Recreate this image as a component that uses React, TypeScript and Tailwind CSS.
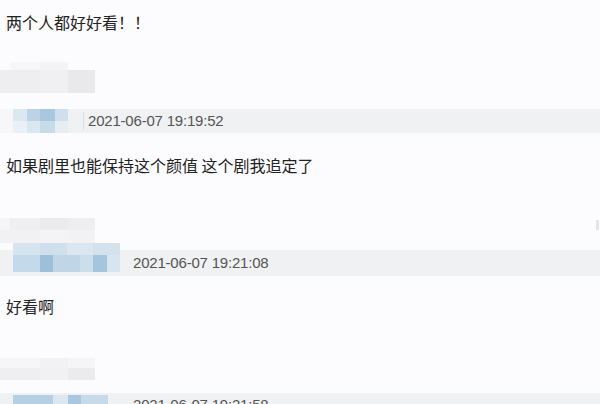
import React from "react";

const cjk = {
  fontFamily: '"Noto Sans CJK SC", "Noto Sans", sans-serif',
};
const latin = {
  fontFamily: '"Liberation Sans", Arial, sans-serif',
};

function Cells({ cells }: { cells: { w: number; c: string }[] }) {
  return (
    <div className="flex h-full">
      {cells.map((c, i) => (
        <div key={i} className="h-full" style={{ width: c.w, background: c.c }} />
      ))}
    </div>
  );
}

function NameMosaic({ top, bottom, topH, bottomH }: { top: { w: number; c: string }[]; bottom: { w: number; c: string }[]; topH: number; bottomH: number }) {
  return (
    <div className="flex flex-col w-[95px]">
      <div style={{ height: topH }}>
        <Cells cells={top} />
      </div>
      <div style={{ height: bottomH }}>
        <Cells cells={bottom} />
      </div>
    </div>
  );
}

export default function App() {
  return (
    <div className="w-[600px] h-[404px] overflow-hidden bg-[#fcfbfd] text-[#222]">
      {/* Block 1 */}
      <div className="pt-[10px] pl-[6px] h-[34px] text-[16px] leading-[24px]" style={cjk}>
        两个人都好好看！！
      </div>
      <div className="mt-[28px]">
        <NameMosaic
          topH={8}
          bottomH={23}
          top={[
            { w: 10, c: "transparent" },
            { w: 30, c: "#f7f6f8" },
            { w: 28, c: "#f4f4f6" },
            { w: 27, c: "transparent" },
          ]}
          bottom={[
            { w: 40, c: "#eeeef0" },
            { w: 28, c: "#f0f0f2" },
            { w: 27, c: "#e9e9eb" },
          ]}
        />
      </div>
      <div className="mt-[16px] h-[24px] flex items-stretch bg-[linear-gradient(to_right,#f7f7f9_0px,#f7f7f9_68px,#f0f1f3_68px)]">
        <div className="ml-[13px] flex flex-col w-[55px]">
          <div className="h-[12px]">
            <Cells
              cells={[
                { w: 14, c: "#dce8f1" },
                { w: 13, c: "#bcd3e6" },
                { w: 15, c: "#a9c7df" },
                { w: 13, c: "#cfe0ec" },
              ]}
            />
          </div>
          <div className="h-[12px]">
            <Cells
              cells={[
                { w: 14, c: "#eaf0f5" },
                { w: 13, c: "#dbe7f0" },
                { w: 15, c: "#c8dbe9" },
                { w: 13, c: "#e6eef4" },
              ]}
            />
          </div>
        </div>
        <div className="ml-[15px] my-[3px] w-px bg-[#dcdcde]" />
        <div className="ml-[4px] text-[15px] tracking-[-0.2px] leading-[24px] text-[#555]" style={latin}>
          2021-06-07 19:19:52
        </div>
      </div>

      {/* Block 2 */}
      <div className="mt-[20px] pl-[6px] h-[24px] text-[16px] leading-[24px]" style={cjk}>
        如果剧里也能保持这个颜值 这个剧我追定了
      </div>
      <div className="mt-[41px] flex justify-between">
        <NameMosaic
          topH={12}
          bottomH={13}
          top={[
            { w: 10, c: "#f5f5f7" },
            { w: 30, c: "#efeff1" },
            { w: 28, c: "#ebebed" },
            { w: 27, c: "#eeeef0" },
          ]}
          bottom={[
            { w: 40, c: "#f1f1f3" },
            { w: 28, c: "#f4f4f6" },
            { w: 27, c: "#f2f2f4" },
          ]}
        />
        <div className="mt-[2px] mr-[1px] w-[3px] h-[10px] bg-[#e4e4e6]" />
      </div>
      <div className="h-[33px] flex items-start bg-[linear-gradient(to_bottom,transparent_7px,#f0f1f3_7px)]">
        <div className="ml-[13px] flex flex-col w-[107px]">
          <div className="h-[12px]">
            <Cells
              cells={[
                { w: 27, c: "#d6e4ef" },
                { w: 27, c: "#cfdfeb" },
                { w: 26, c: "#dae7f0" },
                { w: 27, c: "#d3e2ed" },
              ]}
            />
          </div>
          <div className="h-[17px]">
            <Cells
              cells={[
                { w: 27, c: "#c4d9e9" },
                { w: 13, c: "#9dbfd8" },
                { w: 27, c: "#c0d6e7" },
                { w: 13, c: "#cadeec" },
                { w: 14, c: "#a5c5dd" },
                { w: 13, c: "#d7e5ef" },
              ]}
            />
          </div>
        </div>
        <div className="ml-[13px] mt-[7px] text-[15px] tracking-[-0.2px] leading-[26px] text-[#555]" style={latin}>
          2021-06-07 19:21:08
        </div>
      </div>

      {/* Block 3 */}
      <div className="mt-[18px] pl-[6px] h-[24px] text-[16px] leading-[24px]" style={cjk}>
        好看啊
      </div>
      <div className="mt-[40px]">
        <NameMosaic
          topH={10}
          bottomH={12}
          top={[
            { w: 40, c: "#f6f6f8" },
            { w: 28, c: "#f2f2f4" },
            { w: 27, c: "#f5f5f7" },
          ]}
          bottom={[
            { w: 40, c: "#efeff1" },
            { w: 28, c: "#f1f1f3" },
            { w: 27, c: "#ebebed" },
          ]}
        />
      </div>
      <div className="mt-[13px] h-[24px] flex items-start bg-[#f0f1f3]">
        <div className="ml-[13px] mt-[2px] h-[22px] w-[95px]">
          <Cells
            cells={[
              { w: 40, c: "#b6d0e3" },
              { w: 15, c: "#dce8f1" },
              { w: 13, c: "#a9c7df" },
              { w: 27, c: "#c6daea" },
            ]}
          />
        </div>
        <div className="ml-[25px] text-[15px] tracking-[-0.2px] leading-[24px] text-[#555]" style={latin}>
          2021-06-07 19:21:58
        </div>
      </div>
    </div>
  );
}
